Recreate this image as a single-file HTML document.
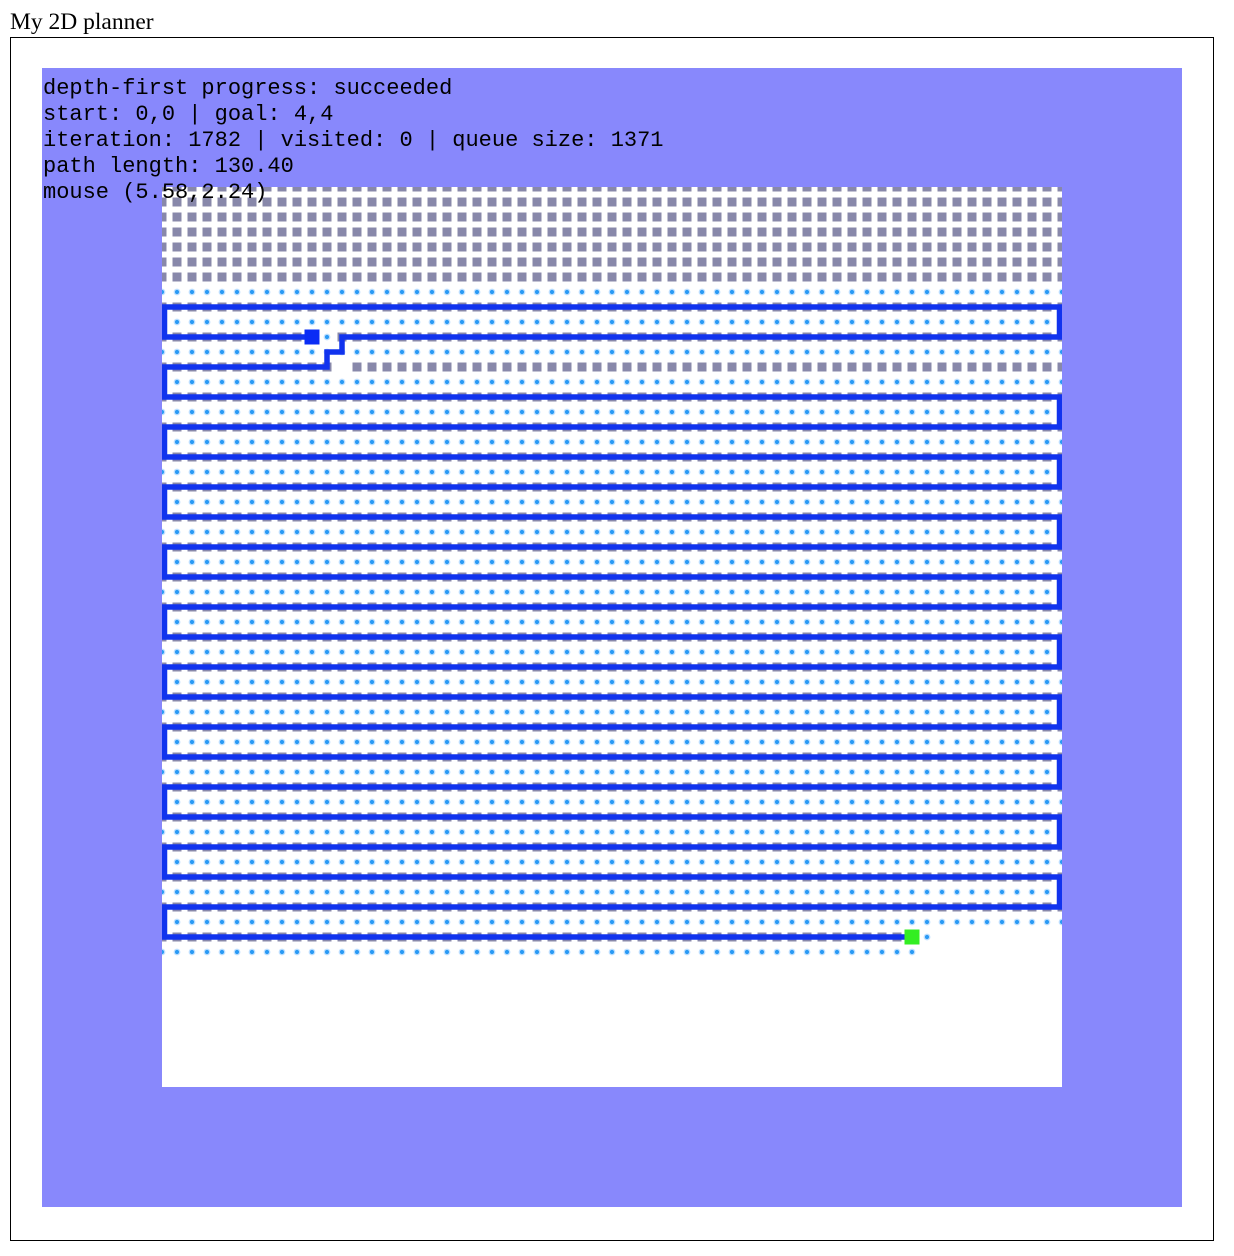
<!DOCTYPE html>
<html><head><meta charset="utf-8"><style>
html,body{margin:0;padding:0;background:#fff;}
svg{display:block;}
</style></head><body>
<svg width="1234" height="1256" viewBox="0 0 1234 1256" xmlns="http://www.w3.org/2000/svg">
<defs>
<pattern id="gr" x="154.5" y="179.5" width="15" height="15" patternUnits="userSpaceOnUse">
<rect x="3" y="3" width="9" height="9" fill="#8888aa"/>
</pattern>
<pattern id="dt" x="154.5" y="179.5" width="15" height="15" patternUnits="userSpaceOnUse">
<circle cx="7.5" cy="7.5" r="3.4" fill="#bfe0ff"/>
<circle cx="7.5" cy="7.5" r="2.1" fill="#2a9af5"/>
</pattern>
<pattern id="mix" x="154.5" y="299.5" width="15" height="30" patternUnits="userSpaceOnUse">
<rect x="3" y="3" width="9" height="9" fill="#8888aa"/>
<circle cx="7.5" cy="22.5" r="3.4" fill="#bfe0ff"/>
<circle cx="7.5" cy="22.5" r="2.1" fill="#2a9af5"/>
</pattern>
<clipPath id="cl"><rect x="162" y="187" width="900" height="900"/></clipPath>
</defs>
<text x="10" y="29" font-family="Liberation Serif, serif" font-size="23.5" fill="#000">My 2D planner</text>
<rect x="10.5" y="37.5" width="1203" height="1203" fill="#fff" stroke="#000" stroke-width="1"/>
<rect x="42" y="68" width="1140" height="1139" fill="#8888fc"/>
<rect x="162" y="187" width="900" height="900" fill="#fff"/>
<g clip-path="url(#cl)">
<rect x="154.5" y="179.5" width="915" height="105" fill="url(#gr)"/>
<rect x="154.5" y="284.5" width="915" height="15" fill="url(#dt)"/>
<rect x="154.5" y="299.5" width="915" height="630" fill="url(#mix)"/>
<rect x="319.5" y="329.5" width="15" height="15" fill="#fff"/>
<rect x="319.5" y="329.5" width="15" height="15" fill="url(#dt)"/>
<rect x="334.5" y="359.5" width="15" height="15" fill="#fff"/>
<rect x="154.5" y="929.5" width="765" height="15" fill="url(#gr)"/>
<rect x="919.5" y="929.5" width="15" height="15" fill="url(#dt)"/>
<rect x="154.5" y="944.5" width="765" height="15" fill="url(#dt)"/>
<polyline fill="none" stroke="#1133ee" stroke-width="5.5" stroke-linejoin="miter" points="312,337 164.5,337 164.5,307 1059.5,307 1059.5,337 342,337 342,352 327,352 327,367 164.5,367 164.5,397 1059.5,397 1059.5,427 164.5,427 164.5,457 1059.5,457 1059.5,487 164.5,487 164.5,517 1059.5,517 1059.5,547 164.5,547 164.5,577 1059.5,577 1059.5,607 164.5,607 164.5,637 1059.5,637 1059.5,667 164.5,667 164.5,697 1059.5,697 1059.5,727 164.5,727 164.5,757 1059.5,757 1059.5,787 164.5,787 164.5,817 1059.5,817 1059.5,847 164.5,847 164.5,877 1059.5,877 1059.5,907 164.5,907 164.5,937 912,937"/>
<rect x="304.5" y="329.5" width="15" height="15" fill="#0a2cf5"/>
<rect x="904.5" y="929.5" width="15" height="15" fill="#33ee22"/>
</g>
<g font-family="Liberation Mono, monospace" font-size="22" fill="#000">
<text x="43" y="94">depth-first progress: succeeded</text>
<text x="43" y="120">start: 0,0 | goal: 4,4</text>
<text x="43" y="146">iteration: 1782 | visited: 0 | queue size: 1371</text>
<text x="43" y="172">path length: 130.40</text>
<text x="43" y="198">mouse (5.58,2.24)</text>
</g>
</svg>
</body></html>
